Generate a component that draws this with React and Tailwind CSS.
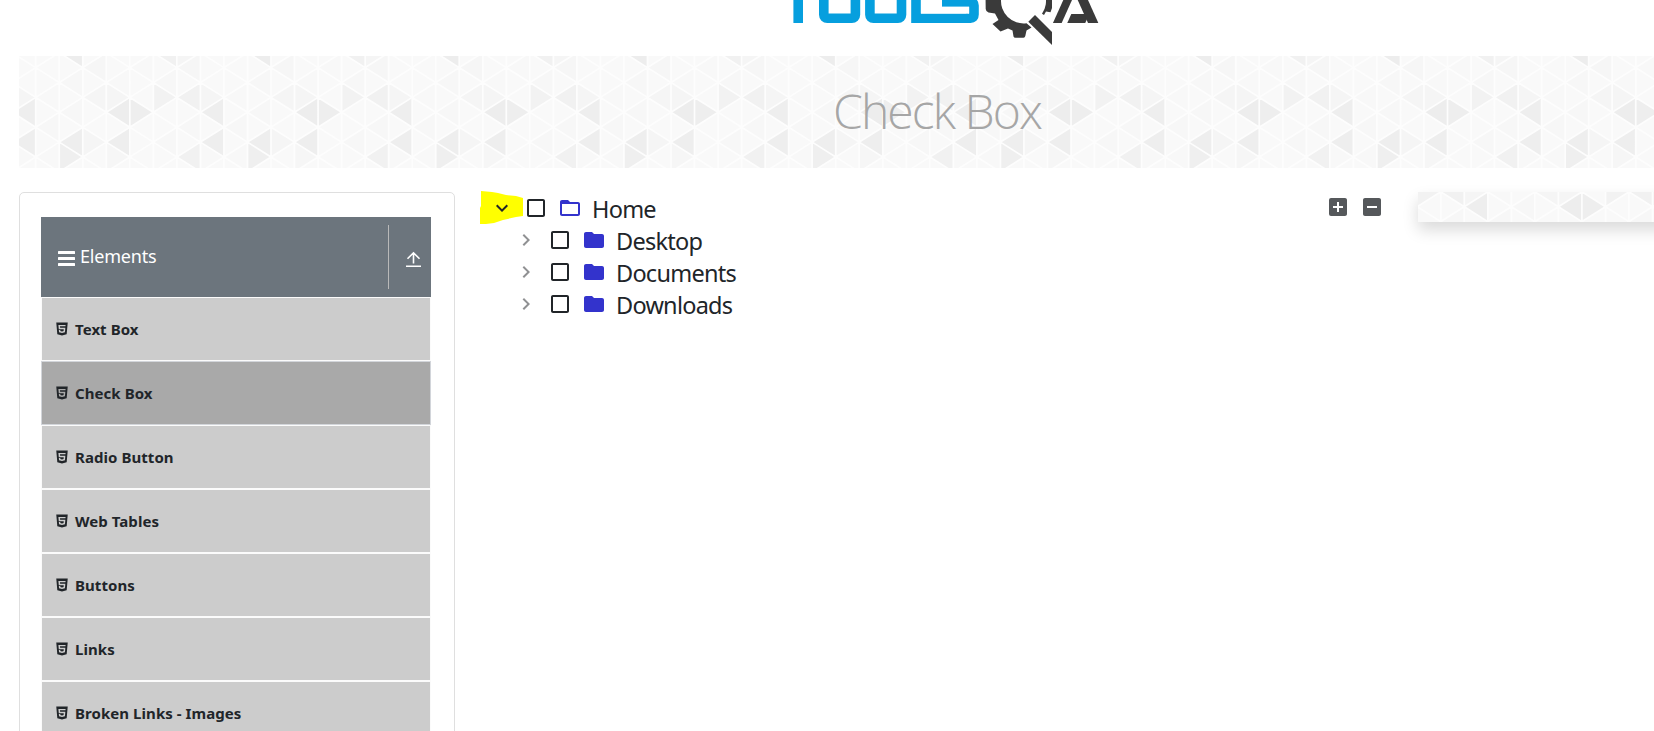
import React from "react";
import { AiFillHtml5 } from "react-icons/ai";
import {
  MdAddBox,
  MdCheckBoxOutlineBlank,
  MdChevronRight,
  MdFolder,
  MdFolderOpen,
  MdIndeterminateCheckBox,
  MdKeyboardArrowDown,
} from "react-icons/md";

const COL = 23.53;
const HALF = 14.9;

// [strip, vertical step, direction, fill]; step 0 sits on the row of the darkest diamond
const TILES = [
  [3, 0, "l", "#ededed"], [4, 0, "r", "#eeeeee"], [7, 0, "l", "#eeeeee"],
  [7, 2, "l", "#eeeeee"], [1, 2, "l", "#eeeeee"], [3, 2, "l", "#eeeeee"],
  [1, 3, "r", "#efefef"], [6, 3, "l", "#f1f1f1"], [5, -1, "r", "#f2f2f2"],
  [6, -1, "l", "#f1f1f1"], [7, -1, "r", "#f5f5f5"], [1, -4, "l", "#ededed"],
  [5, -4, "l", "#f1f1f1"], [6, -4, "r", "#f5f5f5"], [2, -1, "l", "#f5f5f5"],
  [3, -1, "r", "#f5f5f5"], [1, -2, "l", "#f7f7f7"], [2, -3, "l", "#f6f6f6"],
  [6, -3, "l", "#f6f6f6"], [5, -2, "l", "#f7f7f7"], [0, 1, "l", "#f7f7f7"],
  [1, 0, "l", "#f7f7f7"], [6, 1, "l", "#f7f7f7"], [2, 2, "r", "#f5f5f5"],
  [3, 3, "r", "#f6f6f6"], [5, 2, "l", "#f7f7f7"], [0, 3, "l", "#f8f8f8"],
  [7, 3, "r", "#f8f8f8"], [4, -3, "l", "#f8f8f8"], [3, -2, "l", "#f8f8f8"],
  [0, -1, "l", "#f8f8f8"],
];

function trianglePoints(strip, step, dir) {
  const cy = step * HALF;
  const l = strip * COL;
  const r = l + COL;
  return dir === "l"
    ? `${l},${cy} ${r},${cy - HALF} ${r},${cy + HALF}`
    : `${r},${cy} ${l},${cy - HALF} ${l},${cy + HALF}`;
}

function gridLines() {
  const d = [];
  for (let c = 0; c < 8; c++) {
    d.push(`M${c * COL} ${-6 * HALF}V${6 * HALF}`);
    for (let s = -6; s <= 6; s++) {
      if ((c + s) % 2 !== 0) {
        d.push(`M${(c + 1) * COL} ${(s - 1) * HALF}L${c * COL} ${s * HALF}L${(c + 1) * COL} ${(s + 1) * HALF}`);
      }
    }
  }
  return d.join("");
}

const GRID = gridLines();

function Triangles({ x, y, periods }) {
  return (
    <svg className="block h-full w-full bg-[#f9f9f9]" aria-hidden="true">
      {Array.from({ length: periods }, (_, k) => (
        <g key={k} transform={`translate(${x + (k - 1) * COL * 8} ${y})`}>
          {TILES.map(([s, n, dir, fill]) => (
            <polygon key={`${s}${n}${dir}`} points={trianglePoints(s, n, dir)} fill={fill} />
          ))}
          <path d={GRID} stroke="#fdfdfd" strokeWidth="1.7" fill="none" />
        </g>
      ))}
    </svg>
  );
}

function Logo() {
  return (
    <svg className="ml-[780px] block" width="330" height="56" viewBox="0 0 330 56" role="img" aria-label="TOOLSQA">
      <g fill="none" stroke="#069fde" strokeWidth="9.6">
        <line x1="18.2" y1="0" x2="18.2" y2="23" />
        <rect x="43.8" y="-20" width="31.6" height="38.3" rx="3.5" />
        <rect x="89.9" y="-20" width="31.6" height="38.3" rx="3.5" />
        <polyline points="136,-4 136,18.3 188,18.3" />
        <path d="M186 18.3H190.5Q194 18.3 194 14.5V5.5Q194 2 190.5 2H162" />
      </g>
      <rect x="141" y="6.8" width="48" height="6.8" fill="#fff" />
      <g fill="#3a3a3a">
        <path d="M205.5 -6L205.7 9Q206 12 208.5 12.5L215 13.5L218.5 20L212.5 24L220.5 31.5L228 28.5L232.5 30.5L233.5 36.5Q233.8 37.8 235.5 37.8H243.5Q245 37.8 245.3 36L246.5 30.5L251.5 27.5L246.5 23.3A22.5 22.5 0 1 1 262 13.8L264 15L266 11.5L270.5 12.3L272 8V-26H205.5Z" />
        <path d="M255 15L272 32V45L248.3 21.7Z" />
        <rect x="283.3" y="0" width="8.7" height="23" transform="skewX(-24.2)" />
        <rect x="297.6" y="14" width="18" height="9" transform="skewX(-24.2)" />
        <rect x="297.7" y="0" width="10.3" height="23" transform="skewX(24.2)" />
      </g>
    </svg>
  );
}

const ITEMS = ["Text Box", "Check Box", "Radio Button", "Web Tables", "Buttons", "Links", "Broken Links - Images"];

function Sidebar() {
  return (
    <aside className="h-[600px] w-[436px] shrink-0 rounded-[5px] border border-[#dfdfdf] pt-6 pl-[21px]">
      <div className="flex h-20 w-[390px] items-center bg-[#6c757d] text-white">
        <svg className="mt-[3px] ml-[17px] block" width="17" height="15" viewBox="0 0 17 15" fill="currentColor">
          <rect width="17" height="3" rx="0.5" />
          <rect y="6" width="17" height="3" rx="0.5" />
          <rect y="12" width="17" height="3" rx="0.5" />
        </svg>
        <span className="mb-0.5 ml-[5px] flex-1 text-[18px] leading-6 tracking-[-0.2px]">Elements</span>
        <span className="h-16 w-px bg-[#b9b9b9]" />
        <svg className="mt-1 mr-[10px] ml-[17px] block" width="15" height="17" viewBox="0 0 15 17" fill="none" stroke="currentColor" strokeWidth="1.6">
          <path d="M7.5 12.5V2M1.5 7.8L7.5 1.8L13.5 7.8M0 15.3H15" />
        </svg>
      </div>
      <ul className="w-[390px]">
        {ITEMS.map((t, i) => (
          <li
            key={t}
            className={
              i === 1
                ? "flex h-16 items-center border border-[#d2d5da] bg-[#a9a9a9] pl-3"
                : "flex h-16 items-center border border-[#fbfbfb] bg-[#cccccc] pl-3"
            }
          >
            <AiFillHtml5 size={16} />
            <span className="ml-[5px] text-[15px] leading-6 font-bold tracking-[0.06px]">{t}</span>
          </li>
        ))}
      </ul>
    </aside>
  );
}

function Node({ label, open }) {
  return (
    <li className={open ? "flex h-8 items-center pl-3" : "flex h-8 items-center pl-9"}>
      {open ? <MdKeyboardArrowDown size={24} /> : <MdChevronRight size={24} className="text-[#909193]" />}
      <MdCheckBoxOutlineBlank size={24} className="ml-[10px]" />
      {open ? (
        <MdFolderOpen size={24} className="ml-[10px] text-[#3333cc]" />
      ) : (
        <MdFolder size={24} className="ml-[10px] text-[#3333cc]" />
      )}
      <span className="mt-0.5 ml-[10px] text-[23.5px] leading-8 tracking-[-0.75px]">{label}</span>
    </li>
  );
}

export default function App() {
  return (
    <div className="h-[731px] w-[1654px] overflow-hidden bg-white font-['Noto_Sans','Open_Sans',sans-serif] text-[#212529]">
      <Logo />
      <header className="ml-[19px] grid h-28">
        <div className="col-start-1 row-start-1 h-28">
          <Triangles x={16.7} y={56.3} periods={10} />
        </div>
        <h1 className="col-start-1 row-start-1 mb-0.5 self-center pl-[814px] font-['Open_Sans',sans-serif] text-[48px] leading-none font-light tracking-[-1.9px] text-[#a6a6a6]">
          Check Box
        </h1>
      </header>
      <div className="mt-6 flex pl-[19px]">
        <Sidebar />
        <main className="flex w-[963px] shrink-0 items-start justify-between pl-[23px]">
          <div className="grid">
            <svg className="col-start-1 row-start-1 block overflow-visible" width="46" height="34" viewBox="0 0 46 34">
              <path d="M3 -1L14 0L20 1L28 3L38 4L45 6V24L38 25L25 28L16 31L8 32H2V16L3 14Z" fill="#ffff00" />
            </svg>
            <ul className="col-start-1 row-start-1">
              <Node label="Home" open />
              <Node label="Desktop" />
              <Node label="Documents" />
              <Node label="Downloads" />
            </ul>
          </div>
          <div className="mt-[3px] mr-[34px] flex gap-[10px] text-[#55585b]">
            <MdAddBox size={24} />
            <MdIndeterminateCheckBox size={24} />
          </div>
        </main>
        <div className="h-[30px] w-[300px] shrink-0 shadow-[0_8px_16px_rgba(0,0,0,0.15)]">
          <Triangles x={69.8} y={14.7} periods={4} />
        </div>
      </div>
    </div>
  );
}
